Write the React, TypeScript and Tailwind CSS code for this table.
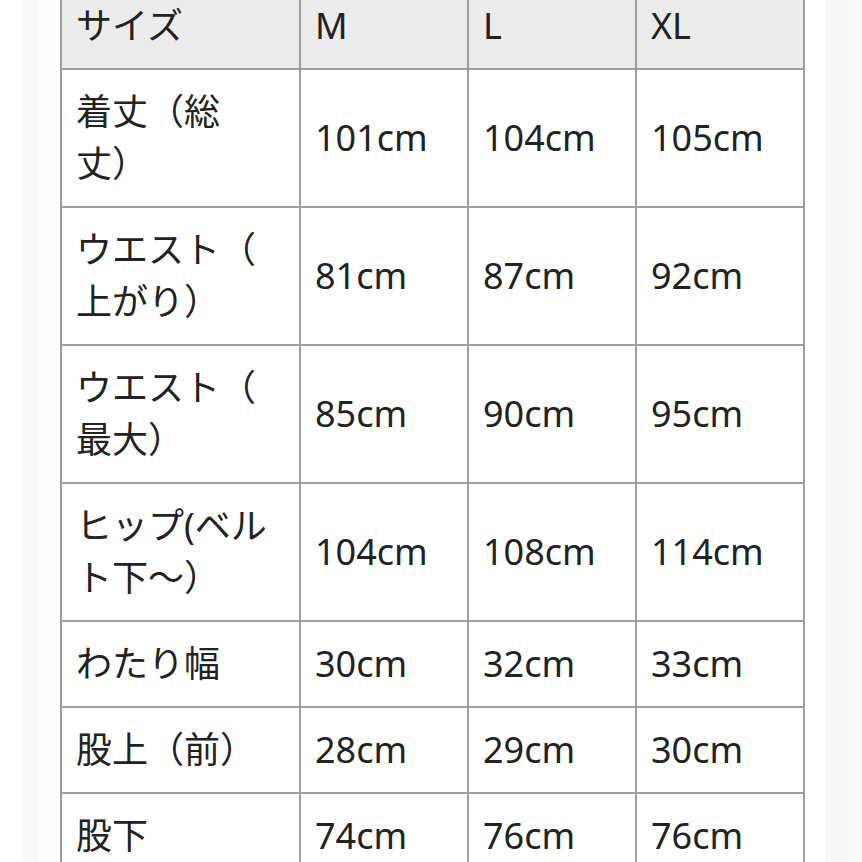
const rows: { label: string[]; m: string; l: string; xl: string }[] = [
  { label: ['着丈（総', '丈）'], m: '101cm', l: '104cm', xl: '105cm' },
  { label: ['ウエスト（', '上がり）'], m: '81cm', l: '87cm', xl: '92cm' },
  { label: ['ウエスト（', '最大）'], m: '85cm', l: '90cm', xl: '95cm' },
  { label: ['ヒップ(ベル', 'ト下～）'], m: '104cm', l: '108cm', xl: '114cm' },
  { label: ['わたり幅'], m: '30cm', l: '32cm', xl: '33cm' },
  { label: ['股上（前）'], m: '28cm', l: '29cm', xl: '30cm' },
  { label: ['股下'], m: '74cm', l: '76cm', xl: '76cm' },
]

const cell = 'border-2 border-[#9d9d9d] pl-[14px] pr-[16px] py-[16px] align-middle text-left font-normal'

export default function App() {
  return (
    <div
      className="flex h-[862px] w-[862px] overflow-hidden bg-white text-[36px] leading-[52px] text-[#222]"
      style={{ fontFamily: '"Noto Sans", "Noto Sans CJK JP", sans-serif' }}
    >
      {/* left edge shading */}
      <div className="w-[23px] shrink-0 bg-white" />
      <div className="w-[14px] shrink-0 bg-[#f9f9f9]" />
      <div className="w-[23px] shrink-0 bg-[#fdfdfd]" />

      <div className="relative z-10 w-[743px] shrink-0">
        <table className="-mt-[18px] w-[743px] table-fixed border-collapse">
          <colgroup>
            <col className="w-[239px]" />
            <col className="w-[168px]" />
            <col className="w-[168px]" />
            <col className="w-[168px]" />
          </colgroup>
          <thead>
            <tr className="bg-[#ececec]">
              <th className={cell}>サイズ</th>
              <th className={cell}>M</th>
              <th className={cell}>L</th>
              <th className={cell}>XL</th>
            </tr>
          </thead>
          <tbody>
            {rows.map((r, i) => (
              <tr key={i} className="bg-white">
                <td className={cell}>
                  {r.label.map((line, j) => (
                    <div key={j} className="whitespace-nowrap">{line}</div>
                  ))}
                </td>
                <td className={cell}>{r.m}</td>
                <td className={cell}>{r.l}</td>
                <td className={cell}>{r.xl}</td>
              </tr>
            ))}
          </tbody>
        </table>
      </div>

      {/* right edge shading */}
      <div className="w-[23px] shrink-0 bg-white" />
      <div className="flex-1 bg-gradient-to-r from-[#f6f6f6] to-[#fbfbfb]" />
    </div>
  )
}
